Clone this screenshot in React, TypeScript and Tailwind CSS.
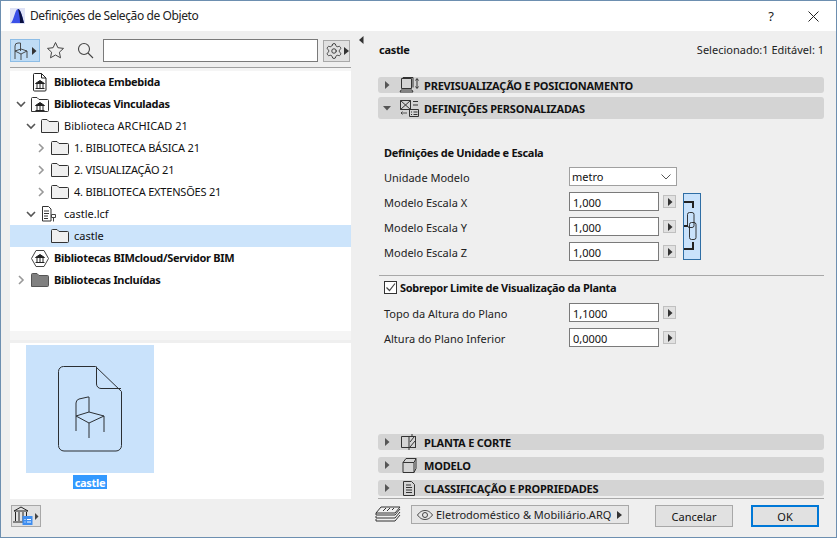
import React from "react";
import { Settings } from "lucide-react";

const ink = "#2b2f33";

function Chevron({ open, gray }: { open?: boolean; gray?: boolean }) {
  return (
    <svg width="10" height="10" viewBox="0 0 10 10" fill="none" stroke={gray ? "#999" : "#555"} strokeWidth="1.6">
      {open ? <path d="M1 3l4 4 4-4" /> : <path d="M3 1l4 4-4 4" />}
    </svg>
  );
}

function Folder({ dark }: { dark?: boolean }) {
  return (
    <svg width="18" height="14" viewBox="0 0 18 14">
      <path
        d="M.5 13.500V1.500a1 1 0 011-1h4.500l2 2h8.500a1 1 0 011 1v9a1 1 0 01-1 1z"
        fill={dark ? "#808080" : "#f0f0f0"}
        stroke={dark ? "#555" : "#333"}
      />
    </svg>
  );
}

function Temple({ x = 0, y = 0 }: { x?: number; y?: number }) {
  return (
    <g transform={`translate(${x} ${y})`} fill="none" stroke="#222" strokeWidth="1">
      <path d="M0 3.500L4.500 .5 9 3.500z" fill="#222" />
      <path d="M1.500 4v4M4.500 4v4M7.500 4v4M0 8.500h9" />
    </g>
  );
}

function DocLib() {
  return (
    <svg width="14" height="19" viewBox="0 0 14 19" fill="none">
      <path d="M1.500.5h7l4.500 4.500v12a1 1 0 01-1 1h-10.500a1 1 0 01-1-1v-15.500a1 1 0 011-1z" fill="#fff" stroke="#222" />
      <path d="M8.500.5v4.500h4.500" stroke="#222" />
      <Temple x={2.500} y={7} />
    </svg>
  );
}

function FolderLib() {
  return (
    <svg width="18" height="15" viewBox="0 0 18 15">
      <path d="M.5 14.500V1.500a1 1 0 011-1h4.500l2 2h8.500a1 1 0 011 1v10a1 1 0 01-1 1z" fill="#fff" stroke="#333" />
      <Temple x={4.500} y={5} />
    </svg>
  );
}

function LcfIcon() {
  return (
    <svg width="16" height="16" viewBox="0 0 16 16" fill="none" stroke="#333">
      <path d="M.5.5h6l2.500 2.500v12h-8.500z" fill="#fff" />
      <path d="M2 5h5M2 7.500h5M2 10h4M2 12.500h4" />
      <path d="M9.500 8.500h4v3h-4zM11.500 11.500v4" stroke="#444" />
    </svg>
  );
}

function BimIcon() {
  return (
    <svg width="18" height="17" viewBox="0 0 18 17" fill="none">
      <path d="M5 .5h8l4.500 8-4.500 8h-8l-4.500-8z" stroke="#444" fill="#fff" />
      <Temple x={4.500} y={4} />
    </svg>
  );
}

function TreeRow({
  depth,
  chevron,
  icon,
  label,
  bold,
  selected,
  gray,
  caps,
}: {
  depth: number;
  chevron?: "open" | "closed";
  icon: React.ReactNode;
  label: string;
  bold?: boolean;
  selected?: boolean;
  gray?: boolean;
  caps?: boolean;
}) {
  return (
    <div className={`flex h-[22px] items-center ${selected ? "bg-[#cce4fb]" : ""}`}>
      <div className="shrink-0" style={{ width: depth * 10 }} />
      <div className="ml-[6px] flex w-[10px] shrink-0 justify-center">
        {chevron && <Chevron open={chevron === "open"} gray={gray} />}
      </div>
      <div className="ml-[5px] flex w-[18px] shrink-0 justify-center">{icon}</div>
      <span
        className={`ml-[5px] whitespace-nowrap pb-[2px] text-[#111] ${bold ? "font-bold tracking-[-0.3px]" : ""} ${
          caps ? "tracking-[-0.2px]" : ""
        }`}
      >
        {label}
      </span>
    </div>
  );
}

function Caret({ down }: { down?: boolean }) {
  return (
    <svg width="8" height="8" viewBox="0 0 8 8" fill="#555">
      {down ? <path d="M0 2h8L4 6.500z" /> : <path d="M2 0l4.500 4L2 8z" />}
    </svg>
  );
}

function Section({ label, icon, open, h }: { label: string; icon: React.ReactNode; open?: boolean; h: string }) {
  return (
    <div className={`flex items-center rounded-[3px] bg-[#d4d4d4] pl-[5px] ${h}`}>
      <Caret down={open} />
      <div className="ml-[4px] flex w-[28px] shrink-0 justify-center">{icon}</div>
      <span className="ml-px whitespace-nowrap font-bold tracking-[-0.2px] text-[#111]">{label}</span>
    </div>
  );
}

function Num({ value }: { value: string }) {
  return (
    <div className="flex items-center">
      <div className="flex h-[19px] w-[90px] items-center border border-[#7a7a7a] bg-white pl-[3px] pt-px text-[#111]">{value}</div>
      <div className="ml-[4px] flex h-[13px] w-[13px] items-center justify-center border border-[#c0c0c0] bg-[#e1e1e1]">
        <svg width="6" height="8" viewBox="0 0 6 8" fill="#333">
          <path d="M1 0l4.500 4L1 8z" />
        </svg>
      </div>
    </div>
  );
}

function Field({ label, children }: { label: string; children: React.ReactNode }) {
  return (
    <div className="flex h-[25px] items-center">
      <span className="w-[191px] shrink-0 pl-[6px] pt-[2px] text-[#222]">{label}</span>
      {children}
    </div>
  );
}

export default function App() {
  return (
    <div
      className="flex h-[538px] w-[837px] flex-col overflow-hidden border border-[#6d8fb0] bg-[#efefef] text-[11px] leading-none"
      style={{ fontFamily: '"Noto Sans", "Liberation Sans", sans-serif' }}
    >
      {/* Title bar */}
      <div className="flex h-[30px] shrink-0 items-center bg-white pl-[9px]">
        <svg width="15" height="16" viewBox="0 0 15 16">
          <rect width="15" height="16" fill="#dfe3f7" />
          <path d="M1 15C4 12 5 1 8 1s5 11 6 14z" fill="#3a50e8" />
          <path d="M8 1c3 0 5 11 6 14h-4C10 9 9 5 8 1z" fill="#0a1040" />
        </svg>
        <span className="ml-[5px] text-[12px] tracking-[-0.4px] text-[#222]">Definições de Seleção de Objeto</span>
        <div className="ml-auto flex items-center pr-[17px]">
          <span className="text-[13px] text-[#222]">?</span>
          <svg className="ml-[34px]" width="11" height="11" viewBox="0 0 11 11" stroke="#222" fill="none">
            <path d="M.5.5l10 10M10.500.5l-10 10" />
          </svg>
        </div>
      </div>

      <div className="flex min-h-0 flex-1">
        {/* Left column */}
        <div className="ml-[9px] flex w-[341px] shrink-0 flex-col">
          <div className="flex h-[36px] shrink-0 items-center pt-[3px]">
            <div className="flex h-[23px] w-[30px] items-center justify-center border border-[#8dbde6] bg-[#bfdcf5]">
              <svg width="26" height="20" viewBox="0 0 26 20" fill="none" stroke="#3a3a3a" strokeWidth=".9">
                <path d="M3 18V5q0-3 3-3h2.500v8M3 10l6-2 6 2v7M3 10l6 3 6-3M9 13v6" />
                <path d="M20 6l4.500 4-4.500 4z" fill="#333" stroke="none" />
              </svg>
            </div>
            <svg className="ml-[6px]" width="19" height="19" viewBox="0 0 19 19" fill="none" stroke="#444">
              <path d="M9.500 1.500l2.400 5.200 5.600.7-4.100 3.800 1.100 5.600-5-2.800-5 2.800 1.100-5.600L1.500 7.400l5.600-.7z" />
            </svg>
            <svg className="ml-[12px]" width="17" height="17" viewBox="0 0 17 17" fill="none" stroke="#444" strokeWidth="1.100">
              <circle cx="7" cy="7" r="5.500" />
              <path d="M11 11l5 5" />
            </svg>
            <div className="ml-[9px] h-[23px] w-[215px] border border-[#7a7a7a] bg-white" />
            <div className="ml-[5px] flex h-[22px] w-[27px] items-center justify-center gap-px border border-[#a8a8a8] bg-[#e1e1e1]">
              <Settings size={18} strokeWidth={1.2} color="#333" />
              <svg width="5" height="8" viewBox="0 0 5 8" fill="#333">
                <path d="M0 0l5 4-5 4z" />
              </svg>
            </div>
          </div>
          <div className="h-px shrink-0 bg-[#a0a0a0]" />
          <div className="h-[272px] shrink-0 bg-[#f5f5f5] pt-[3px]">
            <div className="h-[260px] bg-white">
              <TreeRow depth={0} icon={<DocLib />} label="Biblioteca Embebida" bold />
              <TreeRow depth={0} chevron="open" icon={<FolderLib />} label="Bibliotecas Vinculadas" bold />
              <TreeRow depth={1} chevron="open" icon={<Folder />} label="Biblioteca ARCHICAD 21" />
              <TreeRow depth={2} chevron="closed" gray icon={<Folder />} label="1. BIBLIOTECA BÁSICA 21" caps />
              <TreeRow depth={2} chevron="closed" gray icon={<Folder />} label="2. VISUALIZAÇÃO 21" caps />
              <TreeRow depth={2} chevron="closed" gray icon={<Folder />} label="4. BIBLIOTECA EXTENSÕES 21" caps />
              <TreeRow depth={1} chevron="open" icon={<LcfIcon />} label="castle.lcf" />
              <TreeRow depth={2} icon={<Folder />} label="castle" selected />
              <TreeRow depth={0} icon={<BimIcon />} label="Bibliotecas BIMcloud/Servidor BIM" bold />
              <TreeRow depth={0} chevron="closed" gray icon={<Folder dark />} label="Bibliotecas Incluídas" bold />
            </div>
          </div>
          <div className="mt-[3px] h-[156px] shrink-0 bg-white pl-[16px] pt-[2px]">
            <div className="flex w-[128px] flex-col items-center">
              <div className="flex h-[128px] w-[128px] items-center justify-center bg-[#c9e2fb]">
                <svg width="64" height="86" viewBox="0 0 64 86" fill="none" stroke={ink} strokeWidth="1">
                  <path d="M5.500.5h32l26 25v54a5.500 5.500 0 01-5.500 5.500H6a5.500 5.500 0 01-5.500-5.500V5.500a5 5 0 015-5z" />
                  <path d="M38.500.5V18a4.500 4.500 0 004.500 4.500h20" />
                  <path d="M18 65V37q0-3 3-4l9-2h1v15M18 50l13-4 15 4-15 7zM46 50v16M31 57v15" />
                </svg>
              </div>
              <span className="mt-[2px] flex h-[14px] items-center bg-[#3399ff] px-[2px] font-bold tracking-[-0.3px] text-white">castle</span>
            </div>
          </div>
          <div className="flex flex-1 items-start pt-[6px]">
            <div className="ml-px flex h-[22px] w-[30px] items-center justify-center border border-[#a8a8a8] bg-[#e1e1e1]">
              <svg width="26" height="20" viewBox="0 0 26 20" fill="none">
                <path d="M1 5L8 1l7 4zM2.500 6v9M6 6v9M10 6v9M13.500 6v7M0 16h10" stroke="#222" />
                <rect x="9.500" y="10" width="10" height="9" fill="#3f8ef0" />
                <path d="M11.500 13.500h1M14 13.500h4M11.500 16h1M14 16h4" stroke="#fff" />
                <path d="M22 7l3.500 3.500L22 14z" fill="#444" />
              </svg>
            </div>
          </div>
        </div>

        {/* Splitter */}
        <div className="flex w-[27px] shrink-0 justify-center pt-[5px]">
          <svg className="ml-[-6px]" width="5" height="8" viewBox="0 0 5 8" fill="#333">
            <path d="M4.500 0v8L0 4z" />
          </svg>
        </div>

        {/* Right column */}
        <div className="flex w-[446px] shrink-0 flex-col">
          <div className="flex h-[46px] shrink-0 items-start justify-between pl-px pt-[13px]">
            <span className="font-bold tracking-[-0.3px] text-[#111]">castle</span>
            <span className="text-[#222]">Selecionado:1 Editável: 1</span>
          </div>
          <Section
            h="h-[16px]"
            label="PREVISUALIZAÇÃO E POSICIONAMENTO"
            icon={
              <svg width="20" height="16" viewBox="0 0 20 16" fill="none" stroke="#333">
                <path d="M2.500 1.500h10v10h-10zM4 1v-.5h10v10M2 13h11l1 2H1zM18 2v9M16.500 3.500L18 1.500l1.500 2M16.500 9.500l1.500 2 1.500-2" />
              </svg>
            }
          />
          <div className="h-[4px] shrink-0" />
          <Section
            h="h-[22px]"
            open
            label="DEFINIÇÕES PERSONALIZADAS"
            icon={
              <svg width="19" height="17" viewBox="0 0 19 17" fill="none" stroke="#333">
                <path d="M.5.500h10v9H.5zM.5.500l10 9M10.500.500l-10 9M9.500 9.500h9v7h-9zM11 12h1M13.500 12h4M11 14.500h1M13.500 14.500h4M13 1.500h5M13 5h5" />
                <path d="M1 13h6M1 13l1.500-1.500M1 13l1.500 1.500" strokeWidth=".8" />
              </svg>
            }
          />

          {/* Form */}
          <div className="flex min-h-0 flex-1 flex-col">
            <div className="ml-[6px] mt-[28px] h-[14px] font-bold tracking-[-0.3px] text-[#111]">Definições de Unidade e Escala</div>
            <div className="relative mt-[3px]">
              <Field label="Unidade Modelo">
                <div className="flex h-[19px] w-[108px] items-center justify-between border border-[#a0a0a0] bg-white pl-[2px] pr-[5px] text-[#111]">
                  <span>metro</span>
                  <svg width="10" height="6" viewBox="0 0 10 6" fill="none" stroke="#555">
                    <path d="M.5.500L5 5 9.500.500" />
                  </svg>
                </div>
              </Field>
              <Field label="Modelo Escala X">
                <Num value="1,000" />
              </Field>
              <Field label="Modelo Escala Y">
                <Num value="1,000" />
              </Field>
              <Field label="Modelo Escala Z">
                <Num value="1,000" />
              </Field>
              <div className="absolute left-[305px] top-[29px] h-[67px] w-[18px] border border-[#2f6ea5] bg-[#c9e2fb]">
                <svg width="16" height="65" viewBox="0 0 16 65" fill="none" stroke="#222">
                  <path d="M0 8h9v6M0 55h9v-7M0 32h4" strokeWidth="2" />
                  <rect x="3.500" y="18.500" width="6.500" height="15" rx="2" strokeWidth=".9" />
                  <rect x="5.500" y="28.500" width="6.500" height="17" rx="2" strokeWidth=".9" />
                </svg>
              </div>
            </div>
            <div className="ml-px mt-[11px] h-px shrink-0 bg-[#a8a8a8]" />
            <div className="ml-[6px] mt-[3px] flex h-[16px] items-center">
              <div className="flex h-[13px] w-[13px] items-center justify-center border border-[#333] bg-white">
                <svg width="11" height="11" viewBox="0 0 11 11" fill="none" stroke="#444" strokeWidth="1.200">
                  <path d="M1.500 5.500l3 3 5.500-7" />
                </svg>
              </div>
              <span className="ml-[3px] font-bold tracking-[-0.3px] text-[#111]">Sobrepor Limite de Visualização da Planta</span>
            </div>
            <div className="mt-[5px]">
              <Field label="Topo da Altura do Plano">
                <Num value="1,1000" />
              </Field>
              <Field label="Altura do Plano Inferior">
                <Num value="0,0000" />
              </Field>
            </div>
            <div className="flex-1" />
            <Section
              h="h-[16px]"
              label="PLANTA E CORTE"
              icon={
                <svg width="16" height="16" viewBox="0 0 16 16" fill="none" stroke="#333">
                  <path d="M.5 2.500h14v11H.5z" />
                  <path d="M8 2.500h6.500v11H8zM9 8l4-5M9 13l5-6M11 0v3M8 13v3" />
                </svg>
              }
            />
            <div className="h-[7px] shrink-0" />
            <Section
              h="h-[16px]"
              label="MODELO"
              icon={
                <svg width="15" height="15" viewBox="0 0 15 15" fill="none" stroke="#333">
                  <path d="M1 4.500L4 .5h10v10l-2 4H1zM1 4.500h11v10M12 4.500L14 .5" />
                </svg>
              }
            />
            <div className="h-[7px] shrink-0" />
            <Section
              h="h-[16px]"
              label="CLASSIFICAÇÃO E PROPRIEDADES"
              icon={
                <svg width="12" height="15" viewBox="0 0 12 15" fill="none" stroke="#333">
                  <path d="M.5.500h8l3 3v11H.5zM3 4h5M3 6.500h6M3 9h6M3 11.500h6" />
                </svg>
              }
            />
            <div className="mt-[2px] h-px shrink-0 bg-[#a8a8a8]" />
          </div>

          {/* Footer */}
          <div className="flex h-[38px] shrink-0 items-start pt-[6px]">
            <svg className="ml-[-3px] mt-[1px]" width="26" height="17" viewBox="0 0 26 17" fill="none" stroke="#333">
              <path d="M6 1h19l-5 6H1zM1 7v2h19l5-6M1 10v2h19l5-6M1 13v2h19l5-6" />
              <path d="M8 5l3-3M12 5l3-3M17 4l2-2" />
            </svg>
            <div className="ml-[10px] flex h-[19px] w-[218px] items-center border border-[#a8a8a8] bg-[#e6e6e6] pl-[5px] pr-[6px] text-[#222]">
              <svg width="16" height="10" viewBox="0 0 16 10" fill="none" stroke="#444">
                <path d="M.5 5C3 1.500 5.500.5 8 .5s5 1 7.500 4.500C13 8.500 10.500 9.500 8 9.500S3 8.500.5 5z" />
                <circle cx="8" cy="5" r="2.500" />
              </svg>
              <span className="ml-[3px] whitespace-nowrap">Eletrodoméstico &amp; Mobiliário.ARQ</span>
              <svg className="ml-auto" width="5" height="8" viewBox="0 0 5 8" fill="#333">
                <path d="M0 0l5 4-5 4z" />
              </svg>
            </div>
            <div className="ml-[26px] flex h-[22px] w-[78px] items-center justify-center border border-[#a8a8a8] bg-[#e1e1e1] text-[#111]">Cancelar</div>
            <div className="ml-[18px] flex h-[22px] w-[68px] items-center justify-center border-2 border-[#0078d7] bg-[#e1e1e1] text-[#111]">OK</div>
          </div>
        </div>
      </div>
    </div>
  );
}
